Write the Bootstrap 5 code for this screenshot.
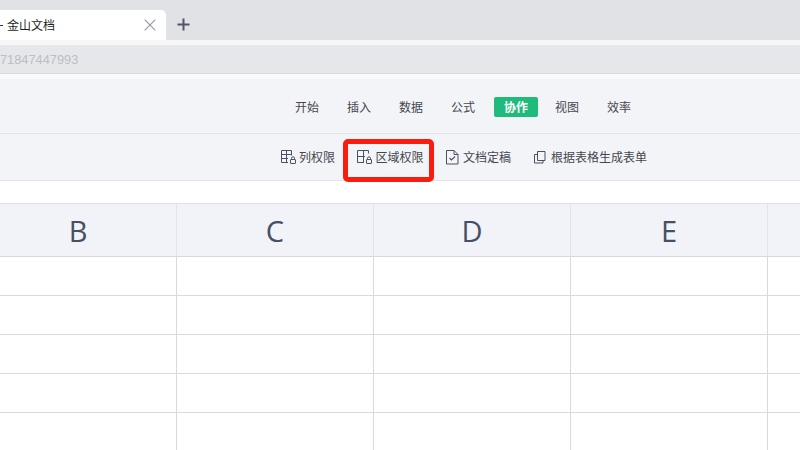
<!DOCTYPE html>
<html lang="zh">
<head>
<meta charset="utf-8">
<link href="https://cdn.jsdelivr.net/npm/bootstrap@5.3.0/dist/css/bootstrap.min.css" rel="stylesheet">
<style>
html,body{width:800px;height:450px;overflow:hidden;background:#f3f4f8;font-family:"Noto Sans CJK SC","Liberation Sans",sans-serif}
.tabstrip{height:40px;background:#e1e2e6;padding-top:10px}
.doc-tab{width:166px;height:30px;background:#fff;border-top-right-radius:5px;font-size:12px;color:#1d1f24}
.tab-dash{width:3px;height:1px;background:#333;margin-right:4px}
.tab-name{line-height:30px}
.tab-close{margin-right:10px}
.tab-add{margin-left:11px}
.gap-white{height:5px;background:#f6f6f7}
.addr{height:29px;background:#e6e7ea;border-bottom:1px solid #d9dadd;color:#bdbec1;font:12.8px/29px "Liberation Sans",sans-serif}
.addr-after{height:5px;background:#fafafb}
.menu-bar{height:55px;background:#f3f4f8;border-bottom:1px solid #e2e3e8;padding:18px 0 0 281px}
.menu-item{width:52px;font-size:12px;line-height:20px;color:#43474f;text-align:center;height:20px}
.menu-on{width:44px;margin:0 3px 0 5px;background:#20bb7c;color:#fff;border-radius:2px;font-weight:700}
.tool-bar{height:47px;background:#f3f4f8;border-bottom:1px solid #e2e3e8;font-size:12px;color:#43474f;position:relative}
.tool-item{position:absolute;top:14px;height:18px;line-height:18px;display:flex;align-items:center;gap:3px}
.tool-1{left:281px}.tool-2{left:357px;gap:3.5px}.tool-3{left:445px}.tool-4{left:533px}
.red-box{position:absolute;left:343px;top:5px;width:91px;height:43px;border:5px solid #fb1c10;border-radius:5px}
.formula{height:23px;background:#fff;border-bottom:1px solid #dfe1e6}
.col-head{height:53px;background:#f1f3f8;border-bottom:1px solid #d5d8df;display:flex}
.hcell{width:197px;flex:none;border-right:1px solid #e2e4ea;text-align:center;font:400 29px/54px "Open Sans","Noto Sans",sans-serif;color:#465062}
.hcell-first{width:177px;padding-right:20px}
.grid-row{height:39px;background:#fff;border-bottom:1px solid #d8dae0;display:flex}
.gcell{width:197px;flex:none;border-right:1px solid #d8dae0}
.gcell-first{width:177px}
.cell-rest{flex:1 1 0;min-width:0;width:auto;border-right:0}
</style>
</head>
<body>
<div class="tabstrip d-flex align-items-start">
  <div class="doc-tab d-flex align-items-center">
    <span class="tab-dash"></span><span class="tab-name flex-grow-1">金山文档</span>
    <svg class="tab-close" width="12" height="12" viewBox="0 0 12 12"><path d="M.7.7l10.6 10.6M11.3.7L.7 11.3" stroke="#8f96a8" stroke-width="1.1" fill="none"/></svg>
  </div>
  <svg class="tab-add mt-2" width="13" height="13" viewBox="0 0 13 13"><path d="M6.5.5v12M.5 6.5h12" stroke="#4d566b" stroke-width="2" fill="none"/></svg>
</div>
<div class="gap-white"></div>
<div class="addr">71847447993</div>
<div class="addr-after"></div>
<div class="menu-bar d-flex">
  <div class="menu-item">开始</div>
  <div class="menu-item">插入</div>
  <div class="menu-item">数据</div>
  <div class="menu-item">公式</div>
  <div class="menu-item menu-on">协作</div>
  <div class="menu-item">视图</div>
  <div class="menu-item">效率</div>
</div>
<div class="tool-bar">
  <div class="tool-item tool-1">
    <svg width="15" height="15" viewBox="0 0 15 15" fill="none" stroke="#4a5160"><path d="M10.500 5.500V.5h-10v12H7M.5 4.500h10M.5 8.500H7M5.500.5v12"/><rect x="9.500" y="9.500" width="5" height="4" rx=".5"/><path d="M10.500 9.500V8.300a1.500 1.500 0 013 0v1.200"/></svg>
    <span>列权限</span>
  </div>
  <div class="tool-item tool-2">
    <svg width="15" height="15" viewBox="0 0 15 15" fill="none" stroke="#4a5160"><path d="M11.500 3.500V.5H.5v12H7M.5 6.500H8M6.500.5v12"/><rect x="9.500" y="9.500" width="5" height="4" rx=".5"/><path d="M10.500 9.500V8.300a1.500 1.500 0 013 0v1.200"/></svg>
    <span>区域权限</span>
  </div>
  <div class="tool-item tool-3">
    <svg width="15" height="15" viewBox="0 0 15 15" fill="none" stroke="#4a5160"><path d="M1.500.5h7.500l4 4v9.500H1.500zM9 .5v4h4"/><path d="M4.500 8l2 2 3.500-3.500" stroke-width="1.200"/></svg>
    <span>文档定稿</span>
  </div>
  <div class="tool-item tool-4">
    <svg width="15" height="15" viewBox="0 0 15 15" fill="none" stroke="#4a5160"><path d="M4.500 10.500V1.500h7.500v9zM4 4.500H1.500v8.500H10v-2.500"/></svg>
    <span>根据表格生成表单</span>
  </div>
  <div class="red-box"></div>
</div>
<div class="formula"></div>
<div class="col-head">
  <div class="hcell hcell-first">B</div>
  <div class="hcell">C</div>
  <div class="hcell">D</div>
  <div class="hcell">E</div>
  <div class="hcell cell-rest"></div>
</div>
<div class="grid-row"><div class="gcell gcell-first"></div><div class="gcell"></div><div class="gcell"></div><div class="gcell"></div><div class="gcell cell-rest"></div></div>
<div class="grid-row"><div class="gcell gcell-first"></div><div class="gcell"></div><div class="gcell"></div><div class="gcell"></div><div class="gcell cell-rest"></div></div>
<div class="grid-row"><div class="gcell gcell-first"></div><div class="gcell"></div><div class="gcell"></div><div class="gcell"></div><div class="gcell cell-rest"></div></div>
<div class="grid-row"><div class="gcell gcell-first"></div><div class="gcell"></div><div class="gcell"></div><div class="gcell"></div><div class="gcell cell-rest"></div></div>
<div class="grid-row"><div class="gcell gcell-first"></div><div class="gcell"></div><div class="gcell"></div><div class="gcell"></div><div class="gcell cell-rest"></div></div>
</body>
</html>
